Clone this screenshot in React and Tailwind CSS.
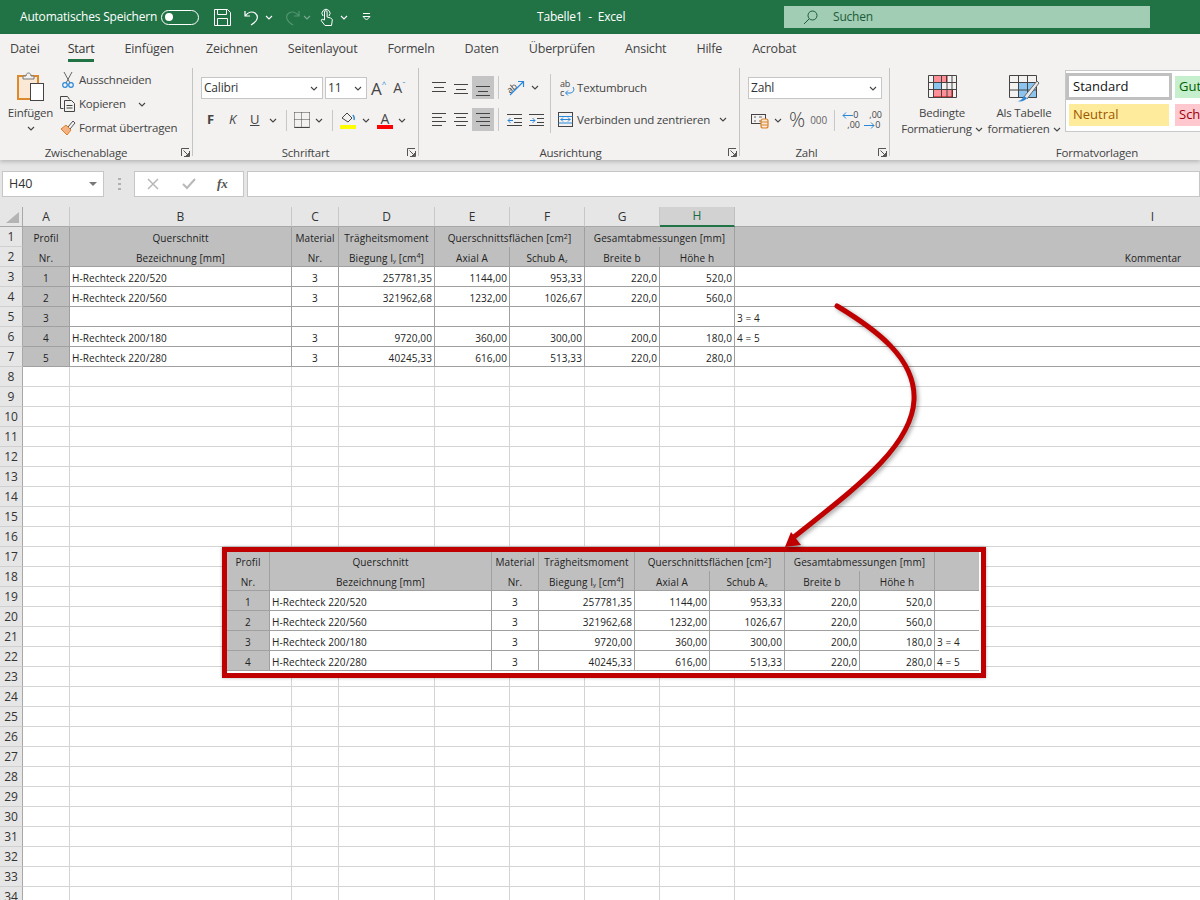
const tabs = ['Datei', 'Start', 'Einfügen', 'Zeichnen', 'Seitenlayout', 'Formeln', 'Daten', 'Überprüfen', 'Ansicht', 'Hilfe', 'Acrobat']
const letters = ['A', 'B', 'C', 'D', 'E', 'F', 'G', 'H', 'I']

const sheetRows = [
  ['1', 'H-Rechteck 220/520', '3', '257781,35', '1144,00', '953,33', '220,0', '520,0', ''],
  ['2', 'H-Rechteck 220/560', '3', '321962,68', '1232,00', '1026,67', '220,0', '560,0', ''],
  ['3', '', '', '', '', '', '', '', '3 = 4'],
  ['4', 'H-Rechteck 200/180', '3', '9720,00', '360,00', '300,00', '200,0', '180,0', '4 = 5'],
  ['5', 'H-Rechteck 220/280', '3', '40245,33', '616,00', '513,33', '220,0', '280,0', ''],
]

const copyRows = [
  ['1', 'H-Rechteck 220/520', '3', '257781,35', '1144,00', '953,33', '220,0', '520,0', ''],
  ['2', 'H-Rechteck 220/560', '3', '321962,68', '1232,00', '1026,67', '220,0', '560,0', ''],
  ['3', 'H-Rechteck 200/180', '3', '9720,00', '360,00', '300,00', '200,0', '180,0', '3 = 4'],
  ['4', 'H-Rechteck 220/280', '3', '40245,33', '616,00', '513,33', '220,0', '280,0', '4 = 5'],
]

function Chevron({ className = '', color = '#444' }) {
  return (
    <svg width="8" height="5" viewBox="0 0 8 5" className={`shrink-0 ${className}`}>
      <path d="M1 1l3 3 3-3" fill="none" stroke={color} strokeWidth="1.1" />
    </svg>
  )
}

function Lines({ rows }) {
  return (
    <svg width="16" height="18" viewBox="0 0 16 18">
      {rows.map(([x1, x2, y]) => (
        <path key={`${x1}-${y}`} d={`M${x1} ${y + 0.5}H${x2}`} stroke="#444" />
      ))}
    </svg>
  )
}

function AlignButton({ rows, active }) {
  return (
    <div className={`flex h-[23px] w-[22px] items-center justify-center ${active ? 'bg-[#c4c4c4]' : ''}`}>
      <Lines rows={rows} />
    </div>
  )
}

function Group({ width, label, labelClass = '', launcher = true, border = true, children }) {
  return (
    <div className={`flex h-[88px] shrink-0 flex-col ${border ? 'border-r border-[#c4c4c4]' : ''}`} style={{ width }}>
      <div className="h-[78px]">{children}</div>
      <div className="grid h-[10px] grid-cols-[1fr_auto_1fr] items-center text-[11.5px] leading-[10px] tracking-[-0.2px] text-[#444]">
        <span />
        <span className={`whitespace-nowrap pt-[2px] ${labelClass}`}>{label}</span>
        {launcher ? (
          <svg width="9" height="9" viewBox="0 0 9 9" className="mr-[2px] justify-self-end">
            <path d="M.5 8V.5H8M8.5 3v5.500H3M2.500 2.500l5 5M5 7.500h2.500V5" fill="none" stroke="#555" />
          </svg>
        ) : <span />}
      </div>
    </div>
  )
}

function Select({ width, value, ml = '' }) {
  return (
    <div className={`flex h-[22px] items-center justify-between border border-[#c6c6c6] bg-white pl-[2px] pr-[4px] text-[12px] tracking-[-0.2px] text-[#333] ${ml}`} style={{ width }}>
      <span>{value}</span>
      <Chevron />
    </div>
  )
}

function Separator({ className = '' }) {
  return <div className={`w-px shrink-0 bg-[#c8c8c8] ${className}`} />
}

function Cell({ text, align = 'left', cls = '' }) {
  const alignCls = align === 'right' ? 'justify-end pr-[2px]' : align === 'center' ? 'justify-center' : 'justify-start pl-[2px]'
  return (
    <div className={`flex h-[20px] items-center overflow-hidden whitespace-nowrap pt-[3px] text-[10px] tracking-[0.1px] text-[#222] ${alignCls} ${cls}`}>
      {text}
    </div>
  )
}

// two header rows, used by the sheet and by the pasted copy
function headerCells(lastLabel) {
  const bg = 'bg-[#bfbfbf] border-r border-[#a0a0a0]'
  const bgNoLine = 'bg-[#bfbfbf]'
  return {
    top: [
      <Cell key="a" text="Profil" align="center" cls={bg} />,
      <Cell key="b" text="Querschnitt" align="center" cls={bg} />,
      <Cell key="c" text="Material" align="center" cls={bg} />,
      <Cell key="d" text="Trägheitsmoment" align="center" cls={bg} />,
      <Cell key="e" text={<span>Querschnittsflächen [cm<sup className="text-[7px]">2</sup>]</span>} align="center" cls={`col-span-2 ${bg}`} />,
      <Cell key="g" text="Gesamtabmessungen [mm]" align="center" cls={`col-span-2 ${bg}`} />,
      <Cell key="i" text="" cls={bgNoLine} />,
    ],
    bottom: [
      <Cell key="a" text="Nr." align="center" cls={`border-b ${bg}`} />,
      <Cell key="b" text="Bezeichnung [mm]" align="center" cls={`border-b ${bg}`} />,
      <Cell key="c" text="Nr." align="center" cls={`border-b ${bg}`} />,
      <Cell key="d" text={<span>Biegung I<sub className="text-[6px]">y</sub> [cm<sup className="text-[7px]">4</sup>]</span>} align="center" cls={`border-b ${bg}`} />,
      <Cell key="e" text="Axial A" align="center" cls={`border-b ${bg}`} />,
      <Cell key="f" text={<span>Schub A<sub className="text-[6px]">z</sub></span>} align="center" cls={`border-b ${bg}`} />,
      <Cell key="g" text="Breite b" align="center" cls={`border-b ${bg}`} />,
      <Cell key="h" text="Höhe h" align="center" cls={`border-b ${bg}`} />,
      <Cell key="i" text={lastLabel} align="center" cls={`border-b border-[#a0a0a0] ${bgNoLine}`} />,
    ],
  }
}

function dataCells(row, rowKey) {
  const line = 'border-b border-r border-[#a0a0a0]'
  return row.map((text, i) => {
    let align = 'right'
    if (i === 0 || i === 2) align = 'center'
    if (i === 1 || i === 8) align = 'left'
    const bg = i === 0 ? 'bg-[#bfbfbf]' : 'bg-white'
    const last = i === 8 ? 'border-b border-[#a0a0a0]' : line
    return <Cell key={`${rowKey}-${i}`} text={text} align={align} cls={`${bg} ${last}`} />
  })
}

function RowHead({ n }) {
  return (
    <div className="flex h-[20px] items-center justify-center border-b border-r border-b-[#d0d0d0] border-r-[#a8a8a8] bg-[#e6e6e6] text-[12px] text-[#333]">
      {n}
    </div>
  )
}

function Sheet() {
  const head = headerCells('Kommentar')
  const empty = Array.from({ length: 27 }, (_, i) => i + 8)
  return (
    <div className="grid grid-cols-[23px_47px_222px_47px_96px_75px_75px_75px_75px_836px]">
      <div className="flex h-[20px] items-end justify-end border-b border-r border-[#a8a8a8] bg-[#e6e6e6] pb-[3px] pr-[3px]">
        <svg width="13" height="11" viewBox="0 0 13 11"><path d="M13 0v11H0z" fill="#b4b4b4" /></svg>
      </div>
      {letters.map((l) => (
        <div
          key={l}
          className={`flex h-[20px] items-center justify-center text-[12px] ${
            l === 'H'
              ? 'border-b-2 border-r border-b-[#217346] border-r-[#c0c0c0] bg-[#d2d2d2] text-[#1d6b40]'
              : 'border-b border-r border-b-[#a8a8a8] border-r-[#c8c8c8] bg-[#e6e6e6] text-[#333]'
          }`}
        >
          {l}
        </div>
      ))}

      <RowHead n={1} />
      {head.top}
      <RowHead n={2} />
      {head.bottom}
      {sheetRows.map((row, i) => [<RowHead key={`h${i}`} n={i + 3} />, ...dataCells(row, `s${i}`)])}

      {empty.map((n) => [
        <RowHead key={`h${n}`} n={n} />,
        ...letters.map((l) => <div key={`${n}${l}`} className="h-[20px] border-b border-r border-[#d4d4d4] bg-white" />),
      ])}
    </div>
  )
}

function PastedCopy() {
  const head = headerCells('')
  return (
    <div className="absolute left-[222px] top-[547px] h-[131px] w-[764px] overflow-hidden border-[5px] border-[#c00000] bg-white pr-[3px] shadow-[0_0_3px_rgba(0,0,0,0.3)]">
      <div className="-mt-px grid grid-cols-[43px_222px_47px_96px_75px_75px_75px_75px_44px]">
        {head.top}
        {head.bottom}
        {copyRows.map((row, i) => dataCells(row, `c${i}`))}
      </div>
    </div>
  )
}

function CurvedArrow() {
  return (
    <svg width="1200" height="900" viewBox="0 0 1200 900" className="pointer-events-none absolute left-0 top-0 drop-shadow-[2px_2px_2px_rgba(0,0,0,0.35)]">
      <path d="M837 306C875 329 916 358 914 400C912 448 850 492 794 537" fill="none" stroke="#c00000" strokeWidth="5" strokeLinecap="round" />
      <path d="M785 547L791 532L801 545z" fill="#c00000" />
    </svg>
  )
}

function TitleBar() {
  return (
    <div className="flex h-[34px] items-center bg-[#217346] pl-[20px] text-[12px] tracking-[-0.2px] text-white">
      <span className="w-[141px] whitespace-nowrap">Automatisches Speichern</span>
      <div className="flex h-[15px] w-[38px] items-center rounded-full border border-white pl-[3px]">
        <div className="h-[8px] w-[8px] rounded-full bg-white" />
      </div>
      <svg width="17" height="17" viewBox="0 0 17 17" className="ml-[15px]" fill="none" stroke="#fff">
        <path d="M.5.5h13l3 3v13H.5zM3.500.5v5h9v-5M3.500 16.500v-7h10v7" />
      </svg>
      <svg width="16" height="17" viewBox="0 0 16 17" className="ml-[13px]" fill="none" stroke="#fff" strokeWidth="1.2">
        <path d="M1 2v5h5M1 7c3-4 7-5 10-3 4 3 3 8-4 12" />
      </svg>
      <Chevron className="ml-[5px]" color="#fff" />
      <svg width="16" height="17" viewBox="0 0 16 17" className="ml-[11px] opacity-40" fill="none" stroke="#9fc7b0" strokeWidth="1.2">
        <path d="M15 2v5h-5M15 7c-3-4-7-5-10-3-4 3-3 8 4 12" />
      </svg>
      <Chevron className="ml-[3px] opacity-40" color="#fff" />
      <svg width="13" height="18" viewBox="0 0 13 18" className="ml-[9px]" fill="none" stroke="#fff">
        <path d="M3 8a4 4 0 1 1 6 0M4.500 12V4a1.300 1.300 0 0 1 2.600 0v5l3.400 1c1.500.5 2 1.300 1.700 3l-.7 4.500H5L1.500 13c-.8-1 .5-2.300 1.500-1.500z" />
      </svg>
      <Chevron className="ml-[7px]" color="#fff" />
      <svg width="9" height="8" viewBox="0 0 9 8" className="ml-[14px]" fill="none" stroke="#fff">
        <path d="M1 .5h7M1 3.500h7L4.500 7z" />
      </svg>
      <span className="ml-[166px] w-[247px] whitespace-pre">Tabelle1  -  Excel</span>
      <div className="flex h-[22px] w-[366px] items-center bg-[#a0cdb3] pl-[19px] text-[#1d5c3a]">
        <svg width="15" height="15" viewBox="0 0 15 15" fill="none" stroke="#1d5c3a">
          <circle cx="9.500" cy="5.500" r="4.500" /><path d="M6 9l-5 5" />
        </svg>
        <span className="ml-[15px]">Suchen</span>
      </div>
    </div>
  )
}

function TabBar() {
  return (
    <div className="flex h-[30px] gap-[30px] bg-[#f3f2f1] pl-[10px] text-[12.5px] tracking-[-0.2px] text-[#444]">
      {tabs.map((t) => (
        <div
          key={t}
          className={`flex h-[28px] items-center ${
            t === 'Start' ? '-ml-[2px] border-b-[3px] border-[#217346] pt-[5px] font-medium text-[#333]' : t === 'Zeichnen' ? 'ml-[2px] pt-[2px]' : 'pt-[2px]'
          }`}
        >
          {t}
        </div>
      ))}
    </div>
  )
}

function ClipboardGroup() {
  const small = 'flex h-[24px] items-center gap-[3px] whitespace-nowrap'
  return (
    <Group width={193} label="Zwischenablage" labelClass="mr-[20px]">
      <div className="flex pl-[7px] text-[11.5px] tracking-[-0.2px] text-[#444]">
        <div className="flex w-[47px] flex-col items-center">
          <svg width="28" height="31" viewBox="0 0 28 31" className="ml-[1px] mt-[3px]">
            <rect x="1" y="5" width="20" height="23" fill="#fbe9d5" stroke="#dd8a2c" strokeWidth="2" />
            <path d="M6 8V5h3c0-4 5-4 5 0h3v3z" fill="#f3f2f1" stroke="#777" />
            <rect x="13.500" y="12.500" width="13" height="17" fill="#fff" stroke="#444" />
          </svg>
          <span className="mt-[4px] leading-[14px]">Einfügen</span>
          <Chevron className="mt-[6px]" />
        </div>
        <div className="ml-[6px] flex flex-col">
          <div className={small}>
            <svg width="16" height="18" viewBox="0 0 16 18" fill="none">
              <path d="M4 1l6 11M12 1L6 12" stroke="#666" />
              <circle cx="5" cy="14" r="2.300" stroke="#2b88d8" strokeWidth="1.200" />
              <circle cx="11" cy="14" r="2.300" stroke="#2b88d8" strokeWidth="1.200" />
            </svg>
            <span>Ausschneiden</span>
          </div>
          <div className={small}>
            <svg width="16" height="16" viewBox="0 0 16 16" fill="none" stroke="#444">
              <path d="M3.500 12.500h-3V.5h7l2 3" />
              <path d="M4.500 4.500h7l3 3v8h-10zM6.500 9.500h6M6.500 12h6" />
            </svg>
            <span>Kopieren</span>
            <Chevron className="ml-[9px]" />
          </div>
          <div className={small}>
            <svg width="16" height="16" viewBox="0 0 16 16" fill="none">
              <path d="M1 9l5-4 5 5-4 5z" fill="#f4b183" stroke="#d9822b" />
              <path d="M8 7l5-6 2 2-5 6" stroke="#555" />
            </svg>
            <span>Format übertragen</span>
          </div>
        </div>
      </div>
    </Group>
  )
}

function FontGroup() {
  return (
    <Group width={226} label="Schriftart">
      <div className="pl-[8px] pt-[9px] text-[#444]">
        <div className="flex items-center">
          <Select width={122} value="Calibri" />
          <Select width={42} value="11" ml="ml-[2px]" />
          <span className="ml-[4px] text-[17px] leading-none">A</span>
          <span className="-mt-[8px] text-[8px] leading-none text-[#2b88d8]">^</span>
          <span className="ml-[7px] text-[14px] leading-none">A</span>
          <span className="-mt-[8px] text-[8px] leading-none text-[#2b88d8]">ˇ</span>
        </div>
        <div className="mt-[9px] flex h-[24px] items-center">
          <span className="ml-[6px] w-[22px] text-[13px] font-bold">F</span>
          <span className="w-[21px] text-[13px] italic">K</span>
          <span className="w-[19px] text-[13px] underline">U</span>
          <Chevron />
          <Separator className="ml-[9px] h-[21px]" />
          <svg width="16" height="16" viewBox="0 0 16 16" className="ml-[7px]" fill="none" stroke="#444">
            <path d="M.5 15.500h15" strokeWidth="1.200" />
            <path d="M.5 .5h15M.5 .5v15M15.500 .5v15M7.500 .5v15M.5 7.500h15" strokeDasharray="1 1" />
          </svg>
          <Chevron className="ml-[5px]" />
          <Separator className="ml-[9px] h-[21px]" />
          <div className="ml-[7px] flex w-[16px] flex-col items-center">
            <svg width="16" height="12" viewBox="0 0 16 12" fill="none" stroke="#444">
              <path d="M2 6l5-5 5 5-4 4z" />
              <path d="M13 3c1 2 2 3 1 5" stroke="#2b88d8" strokeWidth="1.500" />
            </svg>
            <div className="mt-[1px] h-[4px] w-[16px] bg-[#ffff00]" />
          </div>
          <Chevron className="ml-[6px]" />
          <div className="ml-[7px] flex w-[16px] flex-col items-center text-[14px] leading-[13px]">
            <span>A</span>
            <div className="h-[4px] w-[16px] bg-[#ff0000]" />
          </div>
          <Chevron className="ml-[5px]" />
        </div>
      </div>
    </Group>
  )
}

function AlignGroup() {
  return (
    <Group width={321} label="Ausrichtung" labelClass="mr-[17px]">
      <div className="flex pl-[9px] pt-[8px] text-[11.5px] tracking-[-0.2px] text-[#444]">
        <div className="flex flex-col gap-[9px]">
          <div className="flex">
            <AlignButton rows={[[1, 15, 3], [3, 13, 8], [1, 15, 12]]} />
            <AlignButton rows={[[1, 15, 5], [3, 13, 10], [1, 15, 14]]} />
            <AlignButton active rows={[[1, 15, 7], [3, 13, 12], [1, 15, 16]]} />
          </div>
          <div className="flex">
            <AlignButton rows={[[1, 15, 2], [1, 11, 6], [1, 15, 10], [1, 11, 14]]} />
            <AlignButton rows={[[1, 15, 2], [3, 13, 6], [1, 15, 10], [3, 13, 14]]} />
            <AlignButton active rows={[[1, 15, 2], [5, 15, 6], [1, 15, 10], [5, 15, 14]]} />
          </div>
        </div>
        <div className="ml-[4px] flex flex-col gap-[9px]">
          <div className="flex h-[23px] items-center">
            <Separator className="h-[23px]" />
            <svg width="20" height="18" viewBox="0 0 20 18" className="ml-[7px] overflow-visible" fill="none">
              <text x="1" y="13" fontSize="9" fill="#444" fontFamily="Open Sans" transform="rotate(-38 5 10)">ab</text>
              <path d="M4 16L17 3M12 2.500h5.500V8" stroke="#2b88d8" strokeWidth="1.200" />
            </svg>
            <Chevron className="ml-[5px]" />
          </div>
          <div className="flex h-[23px] items-center">
            <Separator className="h-[23px]" />
            <svg width="15" height="14" viewBox="0 0 15 14" className="ml-[8px]" fill="none">
              <path d="M0 1.500h15M7 5.500h8M7 9.500h8M0 12.500h15" stroke="#444" />
              <path d="M6 7.500H1M3.500 5L1 7.500 3.500 10" stroke="#2b88d8" />
            </svg>
            <svg width="15" height="14" viewBox="0 0 15 14" className="ml-[7px]" fill="none">
              <path d="M0 1.500h15M8 5.500h7M8 9.500h7M0 12.500h15" stroke="#444" />
              <path d="M1 7.500h5M3.500 5L6 7.500 3.500 10" stroke="#2b88d8" />
            </svg>
          </div>
        </div>
        <Separator className="ml-[6px] h-[59px] -mt-[2px]" />
        <div className="ml-[7px] flex flex-col gap-[9px]">
          <div className="flex h-[23px] items-center whitespace-nowrap pl-[2px]">
            <svg width="15" height="18" viewBox="0 0 15 18" className="overflow-visible" fill="none">
              <text x="0" y="8" fontSize="9" fill="#444" fontFamily="Open Sans">ab</text>
              <text x="0" y="17" fontSize="9" fill="#444" fontFamily="Open Sans">c</text>
              <path d="M13 8c2 3 0 6-3 6H6M8 11.500L5.500 14 8 16.500" stroke="#2b88d8" />
            </svg>
            <span className="ml-[2px]">Textumbruch</span>
          </div>
          <div className="flex h-[23px] items-center whitespace-nowrap">
            <svg width="15" height="15" viewBox="0 0 15 15" fill="none">
              <rect x=".5" y=".5" width="14" height="14" stroke="#444" />
              <path d="M.5 4.500h14M.5 11h14" stroke="#2b88d8" />
              <path d="M2.500 7.500h10M5 5.500l-2 2 2 2M10 5.500l2 2-2 2" stroke="#2b88d8" />
            </svg>
            <span className="ml-[4px]">Verbinden und zentrieren</span>
            <Chevron className="ml-[9px]" />
          </div>
        </div>
      </div>
    </Group>
  )
}

function DecimalArrow({ flip }) {
  return (
    <svg width="11" height="7" viewBox="0 0 11 7" fill="none" stroke="#2b88d8" className={flip ? '-scale-x-100' : ''}>
      <path d="M1 3.500h10M4 .5l-3 3 3 3" />
    </svg>
  )
}

function NumberGroup() {
  return (
    <Group width={150} label="Zahl" labelClass="mr-[16px]">
      <div className="pl-[8px] pt-[9px] text-[#444]">
        <Select width={134} value="Zahl" />
        <div className="mt-[9px] flex h-[24px] items-center">
          <svg width="18" height="17" viewBox="0 0 18 17" className="ml-[3px]" fill="none">
            <rect x=".5" y="2.500" width="14" height="9" stroke="#444" />
            <path d="M3 5h2M3 9h2M8 5h3M8 9h3" stroke="#666" />
            <rect x="10" y="7" width="7" height="9" rx="2" fill="#fbe9d5" stroke="#d9822b" strokeWidth="1.200" />
            <path d="M10 10h7M10 13h7" stroke="#d9822b" />
          </svg>
          <Chevron className="ml-[5px]" />
          <span className="ml-[7px] text-[20px] font-light leading-none">%</span>
          <span className="ml-[5px] text-[10px] text-[#666]">000</span>
          <Separator className="ml-[7px] h-[21px]" />
          <div className="ml-[7px] flex w-[21px] flex-col text-[9px] leading-[10px]">
            <span className="flex items-center"><DecimalArrow />0</span>
            <span className="pl-[5px]">,00</span>
          </div>
          <div className="ml-[1px] flex w-[20px] flex-col text-[9px] leading-[10px]">
            <span className="pl-[5px]">,00</span>
            <span className="flex items-center"><DecimalArrow flip />0</span>
          </div>
        </div>
      </div>
    </Group>
  )
}

function ConditionalIcon() {
  return (
    <svg width="29" height="23" viewBox="0 0 29 23" fill="none">
      <rect x="5.500" y=".5" width="13" height="7" fill="#ff8f96" stroke="#c00000" />
      <rect x="5.500" y="7.500" width="8" height="7" fill="#8cc4f0" stroke="#1b6fb5" />
      <rect x="5.500" y="14.500" width="19" height="7.500" fill="#ff8f96" stroke="#c00000" />
      <path d="M.5 .5h28v22H.5zM.5 7.500h28M.5 14.500h28M5.500 .5v22M13.500 .5v22M19 .5v22M24 .5v22" stroke="#444" />
    </svg>
  )
}

function TableIcon() {
  return (
    <svg width="31" height="27" viewBox="0 0 31 27" fill="none">
      <path d="M9.500 7.500h18v15h-18z" fill="#8cc4f0" stroke="#1b6fb5" />
      <path d="M.5 .5h27v22H.5zM.5 7.500h27M.5 15h27M9.500 .5v22M18.500 .5v22" stroke="#444" />
      <path d="M14 23L28 6l2 2-12 16" fill="#e8e8e8" stroke="#666" />
      <path d="M8 26c3 0 5-1 7-5l3 2c-2 3-6 4-10 3z" fill="#2b88d8" />
    </svg>
  )
}

function StylesGroup() {
  const line = 'flex items-center justify-center gap-[3px] whitespace-nowrap leading-[16px]'
  return (
    <Group width={414} label="Formatvorlagen" launcher={false} border={false}>
      <div className="flex text-[11.5px] tracking-[-0.2px] text-[#444]">
        <div className="flex w-[97px] flex-col items-center pl-[7px] pt-[7px]">
          <ConditionalIcon />
          <span className={`${line} mt-[7px]`}>Bedingte</span>
          <span className={line}>Formatierung <Chevron /></span>
        </div>
        <div className="flex w-[78px] flex-col items-center pr-[4px] pt-[7px]">
          <TableIcon />
          <span className={`${line} mt-[3px]`}>Als Tabelle</span>
          <span className={line}>formatieren <Chevron /></span>
        </div>
        <div className="mt-[2px] h-[62px] flex-1 border border-[#c8c8c8] bg-white text-[13px] tracking-normal">
          <div className="grid grid-cols-[106px_100px] gap-x-[3px]">
            <div className="mt-[2px] flex h-[27px] items-center border-[3px] border-[#c0c0c0] pl-[4px] text-[#111]">Standard</div>
            <div className="mt-[5px] flex h-[22px] items-center bg-[#c6efce] pl-[4px] text-[#006100]">Gut</div>
            <div className="ml-[3px] mt-[4px] flex h-[22px] w-[100px] items-center bg-[#ffeb9c] pl-[4px] text-[#9c5700]">Neutral</div>
            <div className="mt-[4px] flex h-[22px] items-center bg-[#ffc7ce] pl-[4px] text-[#9c0006]">Schlecht</div>
          </div>
        </div>
      </div>
    </Group>
  )
}

function FormulaBar() {
  return (
    <div className="flex h-[47px] items-start gap-[3px] bg-[#e6e6e6] pl-[2px] pt-[11px]">
      <div className="flex h-[26px] w-[102px] items-center justify-between border border-[#c6c6c6] bg-white pl-[6px] pr-[6px] text-[12.5px] text-[#333]">
        H40
        <svg width="8" height="4" viewBox="0 0 8 4"><path d="M0 0h8L4 4z" fill="#777" /></svg>
      </div>
      <div className="flex w-[24px] justify-center pt-[7px]">
        <svg width="3" height="12" viewBox="0 0 3 12"><path d="M0 0h3v2H0zM0 5h3v2H0zM0 10h3v2H0z" fill="#b0b0b0" /></svg>
      </div>
      <div className="flex h-[26px] w-[110px] items-center border border-[#c6c6c6] bg-white">
        <svg width="12" height="12" viewBox="0 0 12 12" className="ml-[12px]" fill="none" stroke="#b8b8b8" strokeWidth="1.500"><path d="M1 1l10 10M11 1L1 11" /></svg>
        <svg width="14" height="12" viewBox="0 0 14 12" className="ml-[23px]" fill="none" stroke="#b8b8b8" strokeWidth="2"><path d="M1 6l4 4 8-9" /></svg>
        <span className="ml-[21px] font-['Liberation_Serif',serif] text-[13px] font-bold italic text-[#555]">fx</span>
      </div>
      <div className="h-[26px] flex-1 border border-[#c6c6c6] bg-white" />
    </div>
  )
}

export default function App() {
  return (
    <div className="relative h-[900px] w-[1200px] overflow-hidden bg-white font-['Open_Sans',sans-serif]">
      <TitleBar />
      <div className="relative z-10 shadow-[0_2px_4px_rgba(0,0,0,0.2)]">
        <TabBar />
        <div className="flex h-[96px] overflow-hidden bg-[#f3f2f1] pt-[4px]">
          <ClipboardGroup />
          <FontGroup />
          <AlignGroup />
          <NumberGroup />
          <StylesGroup />
        </div>
      </div>
      <FormulaBar />
      <Sheet />
      <PastedCopy />
      <CurvedArrow />
    </div>
  )
}
